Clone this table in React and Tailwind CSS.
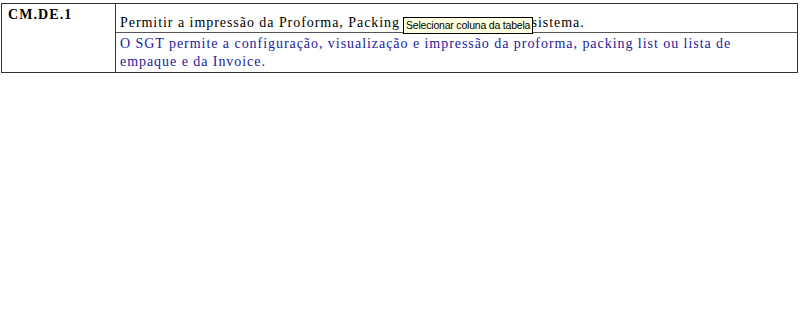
export default function App() {
  return (
    <div className="relative h-[330px] w-[800px] bg-white pl-[1px] pt-[3px]" style={{ fontFamily: '"Liberation Serif", serif' }}>
      <div className="grid w-[797px] grid-cols-[114px_1fr] border border-[#333]">
        <div className="row-span-2 border-r border-[#333] pl-[6px] pt-[3px] text-[14px] font-bold leading-[16px] tracking-[1.1px] text-black">
          CM.DE.1
        </div>
        <div className="h-[29px] border-b border-[#555] pl-[4px] pt-[11px] text-[14px] leading-[16px] tracking-[0.95px] text-black">
          Permitir a impressão da Proforma, Packing List e Invoice pelo sistema.
        </div>
        <div className="h-[39px] pl-[4px] pr-[24px] pt-[2px] text-[14px] leading-[18px] tracking-[0.95px] text-[#22229a]">
          O SGT permite a configuração, visualização e impressão da proforma, packing list ou lista de empaque e da Invoice.
        </div>
      </div>
      <div
        className="absolute left-[403px] top-[17px] h-[17px] border border-black bg-[#ffffe1] px-[2px] text-[10.5px] leading-[15px] tracking-[-0.2px] text-black"
        style={{ fontFamily: '"Liberation Sans", sans-serif' }}
      >
        Selecionar coluna da tabela
      </div>
    </div>
  );
}
